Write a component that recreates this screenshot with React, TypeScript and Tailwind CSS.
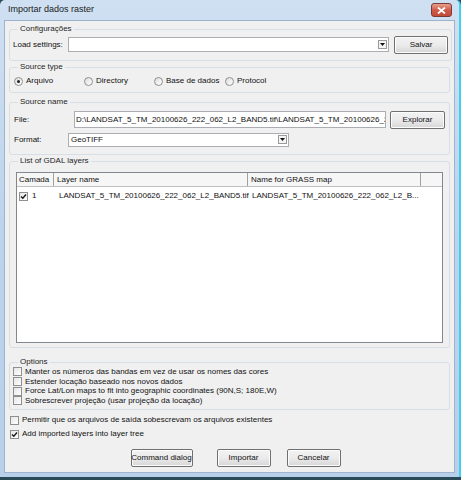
import React from 'react';

const font = { fontFamily: '"Liberation Sans", Arial, sans-serif' };

const Group: React.FC<{ title: string; className?: string; children?: React.ReactNode }> = ({ title, className = '', children }) => (
  <fieldset className={`border border-[#d5dfe5] rounded-[3px] mx-[4px] px-[3px] ${className}`}>
    <legend className="ml-[5px] px-[2px] leading-[10px] text-[#1e1e1e]">{title}</legend>
    {children}
  </fieldset>
);

const Check: React.FC<{ checked?: boolean }> = ({ checked }) => (
  <span className="w-[9px] h-[9px] border border-[#8f8f8f] bg-gradient-to-br from-[#e6e6e6] to-white flex items-center justify-center shrink-0">
    {checked && (
      <svg width="7" height="7" viewBox="0 0 7 7">
        <path d="M1 3.5 L2.8 5.3 L6 1.5" stroke="#1a1a1a" strokeWidth="1.4" fill="none" />
      </svg>
    )}
  </span>
);

const Radio: React.FC<{ checked?: boolean }> = ({ checked }) => (
  <span className="w-[9px] h-[9px] rounded-full border border-[#8f8f8f] bg-gradient-to-br from-[#dcdcdc] to-white flex items-center justify-center shrink-0">
    {checked && <span className="w-[3px] h-[3px] rounded-full bg-[#222]" />}
  </span>
);

const Arrow: React.FC = () => (
  <span className="w-[9px] h-[9px] border border-[#9a9a9a] bg-[#f4f4f4] flex items-center justify-center shrink-0">
    <svg width="5" height="3" viewBox="0 0 5 3">
      <path d="M0 0 H5 L2.5 3 Z" fill="#111" />
    </svg>
  </span>
);

const Button: React.FC<{ label: string; className?: string }> = ({ label, className = '' }) => (
  <button className={`border border-[#707070] rounded-[2px] bg-gradient-to-b from-[#f2f2f2] via-[#ebebeb] to-[#d6d6d6] text-[#111] whitespace-nowrap shadow-[inset_0_0_0_1px_#fcfcfc] flex items-center justify-center ${className}`}>
    {label}
  </button>
);

export default function App() {
  return (
    <div style={font} className="w-[461px] h-[480px] bg-[#2a4a58] overflow-hidden text-[8px] text-[#111]">
      <div className="h-[477px] bg-gradient-to-b from-[#cfe0f2] via-[#bcd3ec] to-[#b8d0ea] border-r-2 border-[#3ed0f0] flex flex-col rounded-t-[5px]">
        <div className="h-[20px] flex items-center pl-[8px] relative">
          <span className="text-[9px] text-[#1a1a1a]">Importar dados raster</span>
          <div className="absolute right-[7px] top-[3px] w-[21px] h-[14px] rounded-[3px] border border-[#7a3a3a] bg-gradient-to-b from-[#e8a090] via-[#d05a48] to-[#c44a38] flex items-center justify-center">
            <svg width="9" height="7" viewBox="0 0 9 7">
              <path d="M1 0.5 L8 6.5 M8 0.5 L1 6.5" stroke="white" strokeWidth="1.8" />
            </svg>
          </div>
        </div>
        <div className="mx-[4px] h-[453px] bg-[#f0f0f0] border border-[#9eb4cc] flex flex-col">
          <Group title="Configurações" className="mt-[3px] h-[37px]">
            <div className="flex items-center h-[21px]">
              <span className="w-[55px]">Load settings:</span>
              <div className="w-[321px] h-[15px] bg-white border border-[#abadb3] flex items-center justify-end pr-[1px]">
                <Arrow />
              </div>
              <Button label="Salvar" className="ml-[5px] w-[54px] h-[18px]" />
            </div>
          </Group>
          <Group title="Source type" className="mt-[1px] h-[31px]">
            <div className="flex items-center h-[18px] pl-[1px]">
              <div className="flex items-center gap-[3px] w-[70px]"><Radio checked /><span>Arquivo</span></div>
              <div className="flex items-center gap-[3px] w-[70px]"><Radio /><span>Directory</span></div>
              <div className="flex items-center gap-[3px] w-[71px]"><Radio /><span>Base de dados</span></div>
              <div className="flex items-center gap-[3px]"><Radio /><span>Protocol</span></div>
            </div>
          </Group>
          <Group title="Source name" className="mt-[4px] h-[58px]">
            <div className="flex items-center h-[19px] mt-[3px]">
              <span className="w-[61px] pl-[1px]">File:</span>
              <div className="w-[312px] h-[17px] bg-white border border-[#abadb3] flex items-center pl-[1px] overflow-hidden">
                <span className="whitespace-nowrap">D:\LANDSAT_5_TM_20100626_222_062_L2_BAND5.tif\LANDSAT_5_TM_20100626_22</span>
              </div>
              <Button label="Explorar" className="ml-[4px] w-[55px] h-[18px]" />
            </div>
            <div className="flex items-center h-[17px] mt-[2px]">
              <span className="w-[55px] pl-[1px]">Format:</span>
              <div className="w-[221px] h-[14px] bg-white border border-[#abadb3] flex items-center justify-between pl-[2px] pr-[1px]">
                <span>GeoTIFF</span>
                <Arrow />
              </div>
            </div>
          </Group>
          <Group title="List of GDAL layers" className="mt-[1px] h-[192px]">
            <div className="mx-[3px] mt-[6px] h-[171px] bg-white border border-[#828790] flex flex-col">
              <div className="h-[14px] flex bg-[#f6f6f6] border-b border-[#c0c0c0]">
                <div className="w-[37px] border-r border-[#a0a0a0] pl-[2px] flex items-center">Camada</div>
                <div className="w-[194px] border-r border-[#a0a0a0] pl-[3px] flex items-center">Layer name</div>
                <div className="w-[173px] border-r border-[#a0a0a0] pl-[3px] flex items-center">Name for GRASS map</div>
                <div className="flex-1" />
              </div>
              <div className="h-[14px] flex items-center mt-[2px]">
                <div className="w-[37px] flex items-center pl-[2px] gap-[4px]">
                  <Check checked />
                  <span>1</span>
                </div>
                <div className="w-[194px] pl-[5px]">LANDSAT_5_TM_20100626_222_062_L2_BAND5.tif</div>
                <div className="w-[173px] pl-[4px]">LANDSAT_5_TM_20100626_222_062_L2_B...</div>
              </div>
            </div>
          </Group>
          <Group title="Options" className="mt-[9px] h-[53px]">
            <div className="flex flex-col">
              {[
                'Manter os números das bandas em vez de usar os nomes das cores',
                'Estender locação baseado nos novos dados',
                'Force Lat/Lon maps to fit into geographic coordinates (90N,S; 180E,W)',
                'Sobrescrever projeção (usar projeção da locação)',
              ].map((t) => (
                <div key={t} className="flex items-center gap-[3px] h-[9.7px]">
                  <Check />
                  <span>{t}</span>
                </div>
              ))}
            </div>
          </Group>
          <div className="flex items-center gap-[3px] ml-[5px] mt-[5px] h-[10px]">
            <Check />
            <span>Permitir que os arquivos de saída sobescrevam os arquivos existentes</span>
          </div>
          <div className="flex items-center gap-[3px] ml-[5px] mt-[4px] h-[10px]">
            <Check checked />
            <span>Add imported layers into layer tree</span>
          </div>
          <div className="flex justify-center mt-[10px] pl-[12px]">
            <Button label="Command dialog" className="w-[62px] h-[18px]" />
            <Button label="Importar" className="ml-[24px] w-[54px] h-[18px]" />
            <Button label="Cancelar" className="ml-[16px] w-[54px] h-[18px]" />
          </div>
        </div>
      </div>
    </div>
  );
}
